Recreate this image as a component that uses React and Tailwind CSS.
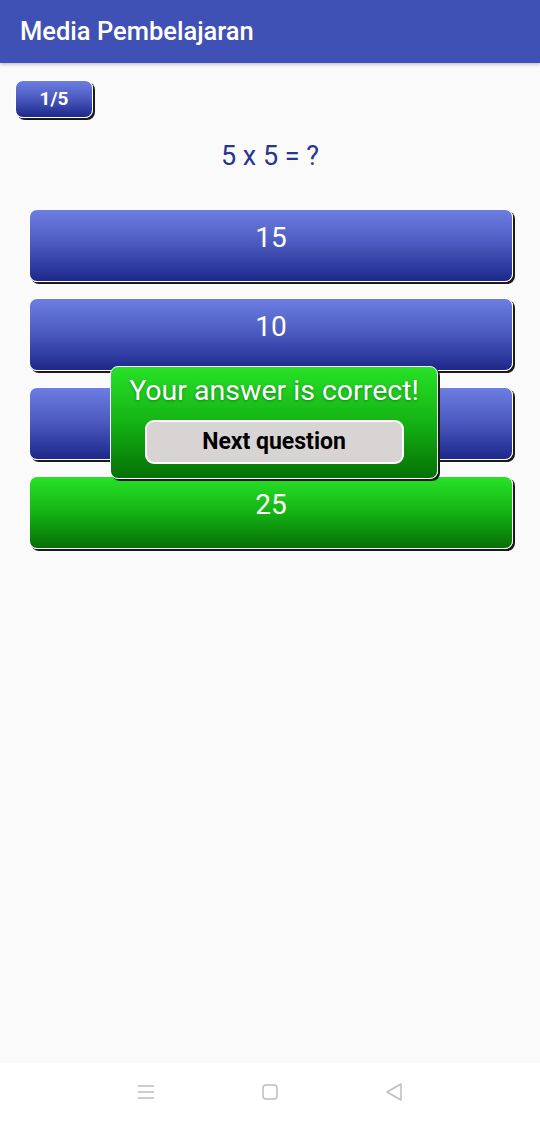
import React from 'react';

const font = { fontFamily: 'Roboto, "Liberation Sans", sans-serif' };

const blueBtn =
  'bg-gradient-to-b from-[#6d7ee2] via-[#4a58bd] to-[#1e278a] border-[1.5px] border-white shadow-[2px_2px_0_#1a1a1a] rounded-[8px] text-white';
const greenBtn =
  'bg-gradient-to-b from-[#27e227] via-[#14b314] to-[#067006] border-[1.5px] border-white shadow-[2px_2px_0_#1a1a1a] rounded-[8px] text-white';

const AnswerButton = ({ label, correct }) => (
  <div
    className={`${correct ? greenBtn : blueBtn} h-[73px] flex items-start justify-center pt-[12px] text-[28px] leading-[32px]`}
  >
    {label}
  </div>
);

const App = () => {
  const answers = [
    { label: '15' },
    { label: '10' },
    { label: '' },
    { label: '25', correct: true },
  ];

  return (
    <div className="w-[540px] h-[1121px] flex flex-col bg-[#fafafa]" style={font}>
      {/* App bar */}
      <header className="h-[63px] bg-[#3f51b5] flex items-center px-[20px] shadow-[0_2px_3px_rgba(0,0,0,0.2)] z-10">
        <h1 className="text-white text-[25.5px] font-medium">Media Pembelajaran</h1>
      </header>

      {/* Content */}
      <main className="flex-1 relative pt-[17px]">
        <div className="pl-[15px]">
          <div className={`${blueBtn} w-[78px] h-[38px] rounded-[5px] flex items-center justify-center text-[19px] font-bold`}>
            1/5
          </div>
        </div>

        <p className="text-center text-[#283593] text-[27px] mt-[22px] leading-[32px]">5 x 5 = ?</p>

        <div className="flex flex-col gap-[16px] mt-[37px] pl-[29px] pr-[27px]">
          {answers.map((a, i) => (
            <AnswerButton key={i} label={a.label} correct={a.correct} />
          ))}
        </div>

        {/* Result popup */}
        <div
          className={`${greenBtn} absolute left-[110px] top-[303px] w-[328px] h-[113px] flex flex-col items-center`}
        >
          <p className="text-[28.5px] mt-[7px] leading-[34px] [text-shadow:0_1px_3px_rgba(0,0,0,0.35)]">
            Your answer is correct!
          </p>
          <div className="mt-[12px] w-[259px] h-[44px] rounded-[9px] bg-[#d8d4d4] border-2 border-white flex items-center justify-center text-black text-[23px] font-bold">
            Next question
          </div>
        </div>
      </main>

      {/* System nav bar */}
      <nav className="h-[58px] bg-white flex items-center justify-between px-[136px]">
        <svg width="20" height="18" viewBox="0 0 20 18" className="text-[#bdbdbd]">
          <path d="M2 3h16M2 9h16M2 15h16" stroke="currentColor" strokeWidth="1.5" fill="none" />
        </svg>
        <svg width="18" height="18" viewBox="0 0 18 18" className="text-[#bdbdbd]">
          <rect x="2" y="2" width="14" height="14" rx="3" stroke="currentColor" strokeWidth="1.5" fill="none" />
        </svg>
        <svg width="20" height="20" viewBox="0 0 20 20" className="text-[#bdbdbd]">
          <path d="M17 2L3 10l14 8z" stroke="currentColor" strokeWidth="1.5" strokeLinejoin="round" fill="none" />
        </svg>
      </nav>
    </div>
  );
};

export default App;
